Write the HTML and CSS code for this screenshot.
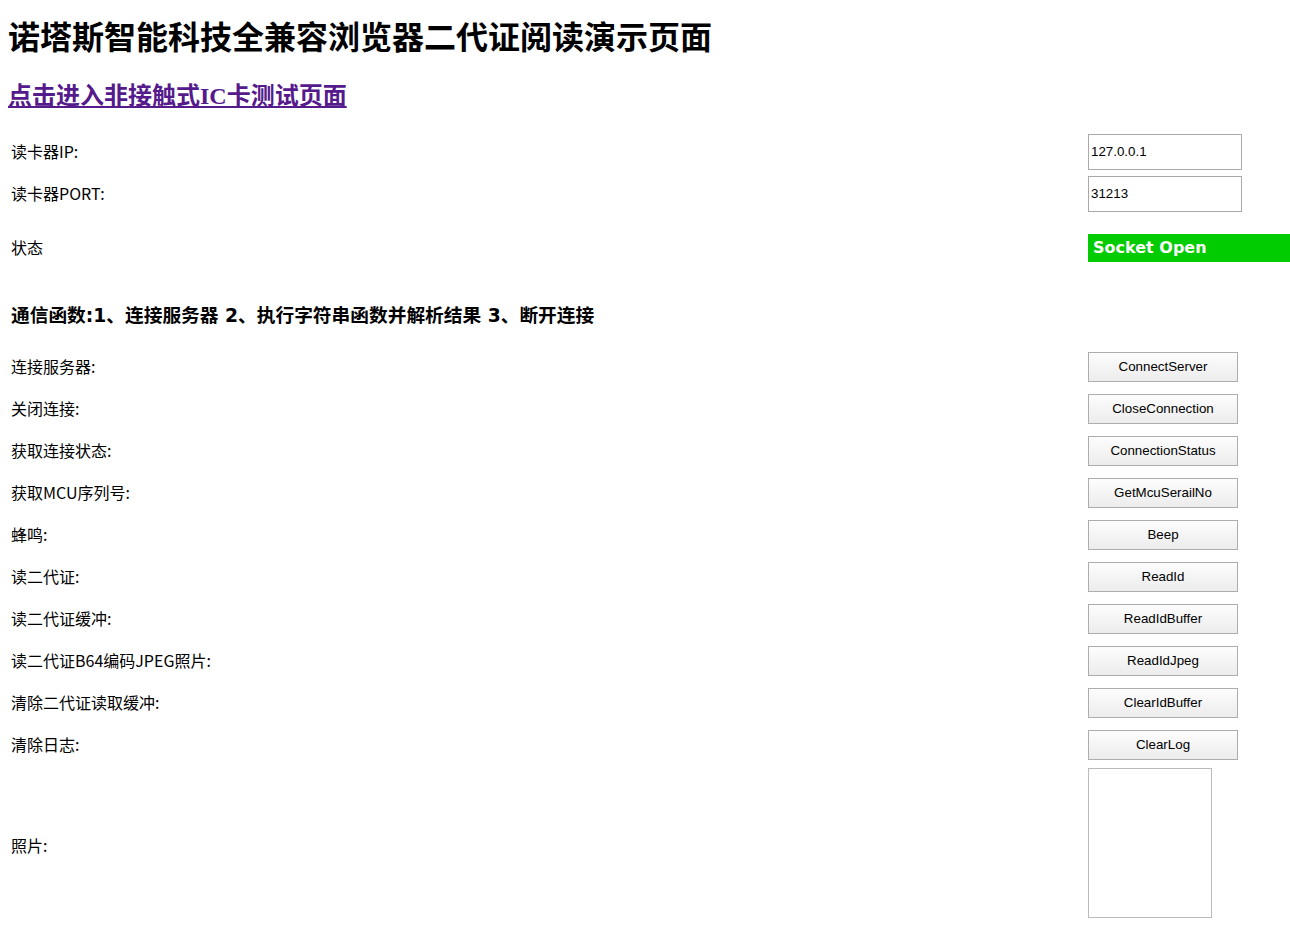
FILE: index.html
```html
<!DOCTYPE html>
<html lang="zh-CN">
<head>
<meta charset="utf-8">
<title>诺塔斯智能科技全兼容浏览器二代证阅读演示页面</title>
<link rel="stylesheet" href="styles.css">
</head>
<body>
<h1 class="title">诺塔斯智能科技全兼容浏览器二代证阅读演示页面</h1>
<h2 class="sub"><a class="sub-link" href="#">点击进入非接触式IC卡测试页面</a></h2>
<div class="grid">
  <div class="label row-std">读卡器IP:</div>
  <div class="ctl row-std"><input class="field" type="text" value="127.0.0.1"></div>
  <div class="label row-std">读卡器PORT:</div>
  <div class="ctl row-std"><input class="field" type="text" value="31213"></div>
  <div class="label row-status">状态</div>
  <div class="ctl row-status"><div class="status">Socket Open</div></div>
  <div class="section row-section">通信函数:1、连接服务器 2、执行字符串函数并解析结果 3、断开连接</div>
  <div class="row-section"></div>
  <div class="label row-std">连接服务器:</div>
  <div class="ctl row-std"><button class="btn">ConnectServer</button></div>
  <div class="label row-std">关闭连接:</div>
  <div class="ctl row-std"><button class="btn">CloseConnection</button></div>
  <div class="label row-std">获取连接状态:</div>
  <div class="ctl row-std"><button class="btn">ConnectionStatus</button></div>
  <div class="label row-std">获取MCU序列号:</div>
  <div class="ctl row-std"><button class="btn">GetMcuSerailNo</button></div>
  <div class="label row-std">蜂鸣:</div>
  <div class="ctl row-std"><button class="btn">Beep</button></div>
  <div class="label row-std">读二代证:</div>
  <div class="ctl row-std"><button class="btn">ReadId</button></div>
  <div class="label row-std">读二代证缓冲:</div>
  <div class="ctl row-std"><button class="btn">ReadIdBuffer</button></div>
  <div class="label row-std">读二代证B64编码JPEG照片:</div>
  <div class="ctl row-std"><button class="btn">ReadIdJpeg</button></div>
  <div class="label row-std">清除二代证读取缓冲:</div>
  <div class="ctl row-std"><button class="btn">ClearIdBuffer</button></div>
  <div class="label row-std">清除日志:</div>
  <div class="ctl row-std"><button class="btn">ClearLog</button></div>
  <div class="label row-photo">照片:</div>
  <div class="ctl row-photo"><div class="photo"></div></div>
</div>
</body>
</html>
```
FILE: styles.css
```css
html, body {
  background: #ffffff;
}
body {
  margin: 8px 0 8px 8px;
  color: #000000;
  font-family: "Noto Sans CJK SC", "Noto Sans", sans-serif;
  font-size: 16px;
}
.title {
  margin: 7px 0 0 0;
  font-size: 32px;
  line-height: 40px;
  font-weight: bold;
  font-family: "Noto Sans CJK SC", sans-serif;
}
.sub {
  margin: 26px 0 20px 0;
  font-size: 24px;
  line-height: 30px;
  font-weight: bold;
  font-family: "Liberation Serif", "Noto Sans CJK SC", serif;
}
.sub-link {
  color: #551a8b;
  text-decoration: underline;
}
.grid {
  display: grid;
  grid-template-columns: 1080px 1fr;
}
.label {
  display: flex;
  align-items: center;
  padding-left: 3px;
  padding-bottom: 2px;
  box-sizing: border-box;
  font-size: 16px;
}
.ctl {
  display: flex;
  align-items: center;
}
.row-std { height: 42px; }
.row-status { height: 66px; }
.row-section { height: 65px; }
.row-photo {
  height: 154px;
}
.row-photo.label { padding-top: 4px; padding-bottom: 0; }
.section {
  display: flex;
  align-items: center;
  padding-left: 3px;
  font-family: "DejaVu Sans", "Noto Sans CJK SC", sans-serif;
  font-size: 18.72px;
  font-weight: bold;
  white-space: nowrap;
}
.field {
  box-sizing: border-box;
  width: 154px;
  height: 36px;
  margin: 0;
  padding: 0 2px 2px 2px;
  border: 1px solid #a9a9a9;
  font-family: "Liberation Sans", Arial, sans-serif;
  font-size: 13.33px;
  color: #000;
  background: #fff;
}
.status {
  flex: 1 1 auto;
  height: 28px;
  box-sizing: border-box;
  padding-left: 5px;
  background: #00cc00;
  color: #ffffff;
  font-family: "DejaVu Sans", Verdana, sans-serif;
  font-weight: bold;
  font-size: 16px;
  line-height: 28px;
  white-space: nowrap;
}
.btn {
  box-sizing: border-box;
  width: 150px;
  height: 30px;
  margin: 0;
  padding: 0 0 2px 0;
  border: 1px solid #adadad;
  border-radius: 0;
  background: linear-gradient(#fdfdfd, #ececec);
  font-family: "Liberation Sans", Arial, sans-serif;
  font-size: 13.33px;
  color: #000;
}
.photo {
  box-sizing: border-box;
  width: 124px;
  height: 150px;
  border: 1px solid #bbbbbb;
  background: #fff;
}
```
